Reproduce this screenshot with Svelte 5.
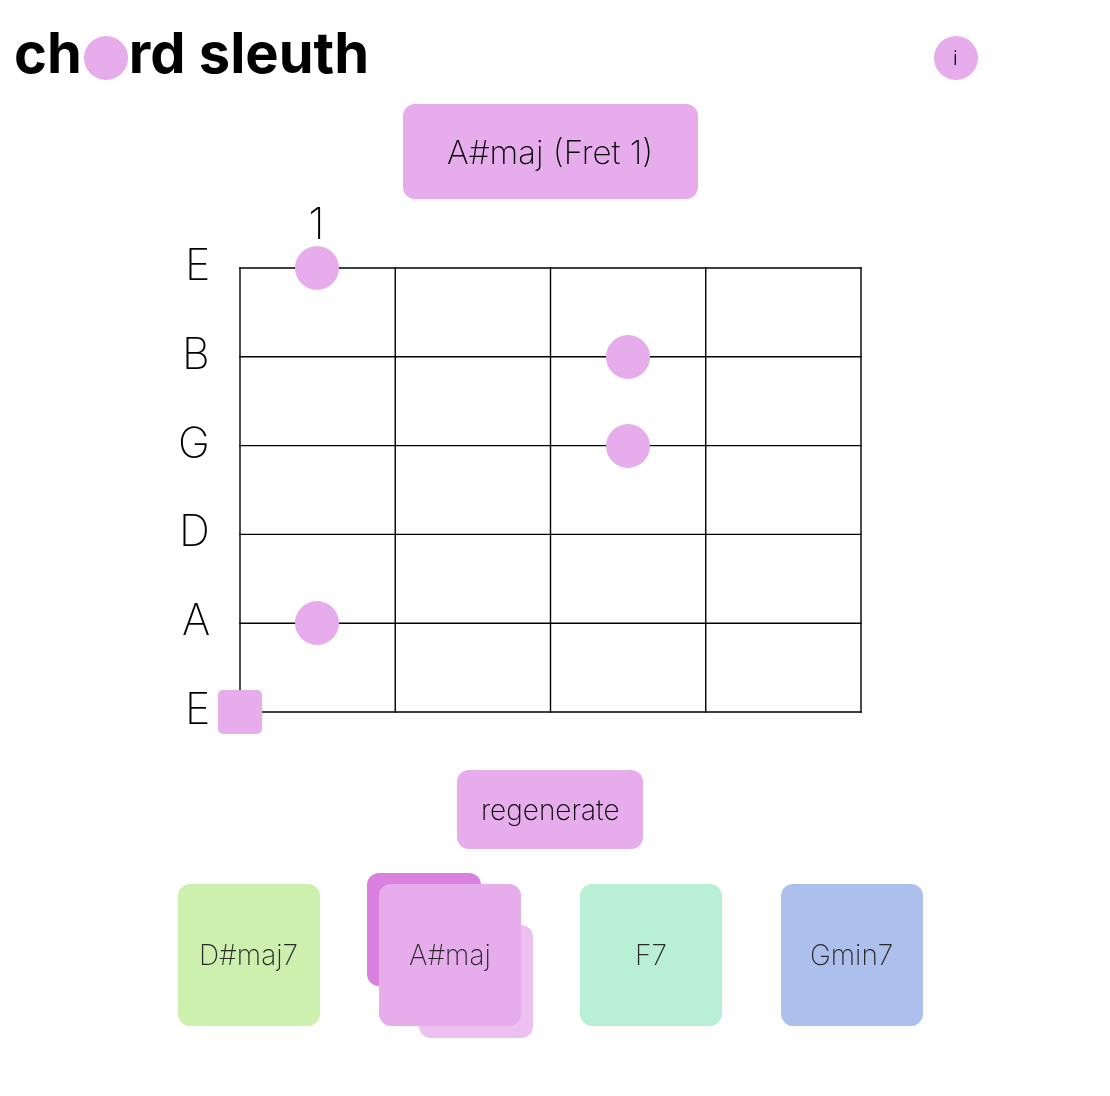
<script>
  const strings = ['E', 'B', 'G', 'D', 'A', 'E'];
  const stepX = 155.25;
  const stepY = 88.8;
  const frets = [0, 1, 2, 3, 4];
  const rows = [0, 1, 2, 3, 4, 5];
  const dots = [
    { s: 0, f: 0 },
    { s: 1, f: 2 },
    { s: 2, f: 2 },
    { s: 4, f: 0 }
  ];
  const chords = [
    { name: 'D#maj7', tone: 'green' },
    { name: 'A#maj', tone: 'pink', active: true },
    { name: 'F7', tone: 'mint' },
    { name: 'Gmin7', tone: 'blue' }
  ];
</script>

<main class="page">
  <header class="top">
    <h1 class="title">ch<span class="o"></span>rd sleuth</h1>
    <button class="info"><span class="txt">i</span></button>
  </header>

  <div class="name"><span class="txt">A#maj (Fret 1)</span></div>

  <section class="board">
    <div class="fretnum">1</div>
    {#each strings as s, i}
      <span class="label" style="top: {i * stepY}px">{s}</span>
    {/each}
    <svg class="grid" width="621" height="444" viewBox="0 0 621 444">
      {#each frets as f}
        <line x1={f * stepX} y1="0" x2={f * stepX} y2="444" />
      {/each}
      {#each rows as r}
        <line x1="0" y1={r * stepY} x2="621" y2={r * stepY} />
      {/each}
    </svg>
    {#each dots as d}
      <span class="dot" style="left: {(d.f + 0.5) * stepX}px; top: {d.s * stepY}px"></span>
    {/each}
    <span class="nut"></span>
  </section>

  <button class="regen"><span class="txt">regenerate</span></button>

  <section class="chords">
    {#each chords as c}
      <div class="chord {c.tone}">
        {#if c.active}
          <span class="back dark"></span>
          <span class="back light"></span>
        {/if}
        <span class="face"><span class="txt">{c.name}</span></span>
      </div>
    {/each}
  </section>
</main>

<style>
  :global(body) {
    margin: 0;
  }
  .page {
    width: 1100px;
    height: 1096px;
    font-family: Inter, "Liberation Sans", sans-serif;
    color: #000;
    display: flex;
    flex-direction: column;
    align-items: center;
    box-sizing: border-box;
    overflow: hidden;
  }
  .txt {
    display: inline-block;
    will-change: transform;
  }
  .top {
    width: 100%;
    height: 104px;
    position: relative;
    flex: none;
  }
  .title {
    margin: 0;
    position: absolute;
    left: 14px;
    top: 19px;
    font-size: 56px;
    line-height: 68px;
    font-weight: 700;
    white-space: nowrap;
    will-change: transform;
  }
  .o {
    display: inline-block;
    width: 44.5px;
    height: 44.5px;
    border-radius: 50%;
    background: #e6acec;
    vertical-align: -7px;
    margin: 0 0.5px 0 2px;
  }
  .info {
    position: absolute;
    left: 934px;
    top: 36px;
    width: 44px;
    height: 44px;
    border: 0;
    padding: 0 1px 0 0;
    border-radius: 50%;
    background: #e6acec;
    font: 300 20px Inter, sans-serif;
    color: #000;
  }
  .name {
    width: 295px;
    height: 94.5px;
    flex: none;
    display: flex;
    align-items: center;
    justify-content: center;
    padding-top: 2px;
    border-radius: 12px;
    background: #e6acec;
    font-size: 33px;
    font-weight: 200;
    box-sizing: border-box;
  }
  .board {
    position: relative;
    width: 621px;
    height: 444px;
    margin-top: 69.5px;
    flex: none;
  }
  .grid {
    display: block;
    overflow: visible;
    stroke: #000;
    stroke-width: 1.4;
    stroke-linecap: square;
  }
  .fretnum {
    position: absolute;
    left: -1px;
    width: 155px;
    top: -71px;
    line-height: 52px;
    text-align: center;
    font-size: 43px;
    font-weight: 200;
    will-change: transform;
  }
  .label {
    position: absolute;
    right: calc(100% + 29.5px);
    transform: translateY(-30px);
    line-height: 52px;
    font-size: 43px;
    font-weight: 200;
    text-align: right;
    will-change: transform;
  }
  .dot {
    position: absolute;
    width: 44px;
    height: 44px;
    margin: -22px 0 0 -22px;
    border-radius: 50%;
    background: #e6acec;
  }
  .nut {
    position: absolute;
    left: -22px;
    top: 422px;
    width: 44px;
    height: 44px;
    border-radius: 5px;
    background: #e6acec;
  }
  .regen {
    width: 186px;
    height: 79px;
    flex: none;
    margin-top: 58px;
    border: 0;
    padding: 0;
    border-radius: 12px;
    background: #e6acec;
    font: 200 28px Inter, sans-serif;
    color: #000;
  }
  .chords {
    display: flex;
    gap: 59px;
    margin-top: 35px;
    margin-left: 1px;
    flex: none;
  }
  .chord {
    position: relative;
    width: 142px;
    height: 142px;
  }
  .face {
    position: absolute;
    inset: 0;
    display: flex;
    align-items: center;
    justify-content: center;
    box-sizing: border-box;
    border-radius: 12px;
    font-size: 28px;
    font-weight: 200;
    color: #2a2a2a;
  }
  .green .face { background: #cdf0af; }
  .pink .face { background: #e6acec; }
  .mint .face { background: #b9efd5; }
  .blue .face { background: #adbfec; }
  .back {
    position: absolute;
    width: 113.6px;
    height: 113.6px;
    border-radius: 12px;
  }
  .dark {
    left: -12px;
    top: -11.5px;
    background: #da80df;
  }
  .light {
    left: 40.4px;
    top: 40.5px;
    background: #ecc0f0;
  }
</style>
